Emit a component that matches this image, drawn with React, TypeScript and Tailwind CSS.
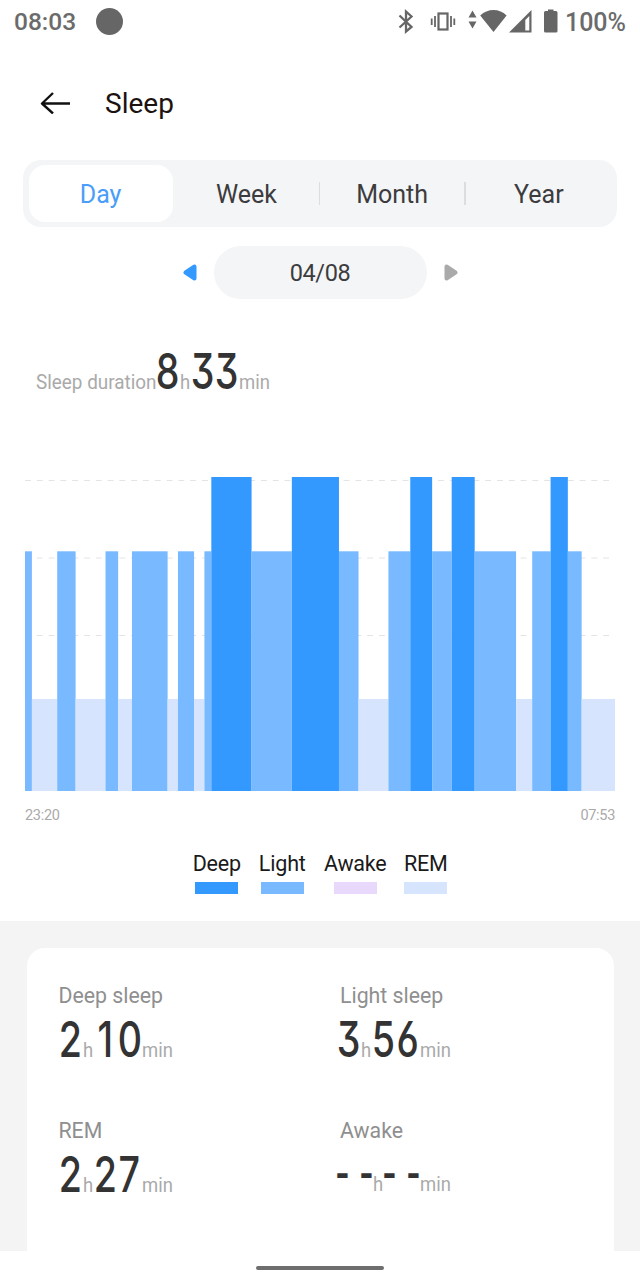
import { useState } from 'react';

type Stage = 'deep' | 'light' | 'rem';

// [stage, minutes], from 23:20 to 07:53
const SEGMENTS: [Stage, number][] = [
  ['light', 6],
  ['rem', 22],
  ['light', 16],
  ['rem', 26],
  ['light', 11],
  ['rem', 12],
  ['light', 31],
  ['rem', 9],
  ['light', 14],
  ['rem', 9],
  ['light', 6],
  ['deep', 35],
  ['light', 35],
  ['deep', 41],
  ['light', 17],
  ['rem', 26],
  ['light', 19],
  ['deep', 19],
  ['light', 17],
  ['deep', 20],
  ['light', 36],
  ['rem', 14],
  ['light', 16],
  ['deep', 15],
  ['light', 12],
  ['rem', 29],
];

const STAGE_STYLE: Record<Stage, { height: number; fill: string }> = {
  deep: { height: 314, fill: '#3399ff' },
  light: { height: 239.7, fill: '#78b9ff' },
  rem: { height: 92, fill: '#d6e4fe' },
};

const LEGEND = [
  { label: 'Deep', swatch: 'bg-[#3399ff]', width: 'w-[48px]' },
  { label: 'Light', swatch: 'bg-[#78b9ff]', width: 'w-[48px]' },
  { label: 'Awake', swatch: 'bg-[#e8d8fb]', width: 'w-[63px]' },
  { label: 'REM', swatch: 'bg-[#d6e4fe]', width: 'w-[43px]' },
];

const TABS = ['Day', 'Week', 'Month', 'Year'];

function StatusBar() {
  return (
    <div className="flex h-11 items-center justify-between px-[14px] text-[#6b6b6b]">
      <div className="flex items-center">
        <span className="w-[82px] pt-px text-[24.5px] leading-none font-medium">08:03</span>
        <span className="mb-[2px] size-[27px] rounded-full bg-[#666]" />
      </div>
      <div className="flex items-center">
        <svg width="168" height="28" viewBox="392 8 168 28" fill="none">
          <path d="M399.5 15.5 L411.5 27 L406 31.5 V11.5 L411.5 16.5 L399.5 27.5" stroke="#666" strokeWidth="2.3" />
          <rect x="438.5" y="13.5" width="9" height="16" stroke="#666" strokeWidth="2.2" />
          <path d="M435 16v11M451 16v11M431.7 18.5v6.5M454.3 18.5v6.5" stroke="#666" strokeWidth="1.8" />
          <path d="M472.5 10.5l4 7h-8zM472.5 28.5l4-7h-8z" fill="#666" />
          <path d="M493.5 32 L480.2 15.5 Q486 10 493.5 10 Q501 10 506.6 15.5 Z" fill="#666" />
          <path fillRule="evenodd" d="M509 32.5 L531.5 10 V32.5 Z M525.3 20 V30.5 H529.3 V16 Z" fill="#666" />
          <path d="M544 12.5q0-1.5 1.5-1.5h2.5V9.5h5.5V11h2.5q1.5 0 1.5 1.5v18.5q0 1.5-1.5 1.5h-10.5q-1.5 0-1.5-1.5z" fill="#666" />
        </svg>
        <span className="ml-[5px] pt-px text-[25px] leading-none font-medium">100%</span>
      </div>
    </div>
  );
}

function Figures({ text }: { text: string }) {
  return (
    <span className="inline-flex items-baseline text-[49.5px] leading-[50px] font-medium text-[#333]">
      {text.split('').map((char, i) =>
        /\d/.test(char) ? (
          <span key={i} className="inline-flex w-6 justify-center font-['Inter',sans-serif]">
            <span className="scale-x-[0.76] [font-feature-settings:'cv09','cv03']">{char}</span>
          </span>
        ) : (
          <span key={i} className="inline-flex w-3 justify-center whitespace-pre">
            <span className="scale-x-[0.8]">{char}</span>
          </span>
        )
      )}
    </span>
  );
}

function Duration({ hours, minutes }: { hours: string; minutes: string }) {
  return (
    <span className="flex items-baseline text-[20.5px] leading-[50px] text-[#aaa]">
      <Figures text={hours} />
      <span className="w-[11px]">
        <span className="inline-block origin-left scale-x-90">h</span>
      </span>
      <Figures text={minutes} />
      <span className="origin-left scale-x-90">min</span>
    </span>
  );
}

function SleepChart() {
  const total = SEGMENTS.reduce((sum, [, minutes]) => sum + minutes, 0);
  let elapsed = 0;

  return (
    <svg width="590" height="314" viewBox="0 0 590 314">
      {[3.5, 81, 158.5].map(y => (
        <line key={y} x1="0" x2="590" y1={y} y2={y} stroke="#e4e4e4" strokeWidth="1" strokeDasharray="5.9 5.9" />
      ))}
      {SEGMENTS.map(([stage, minutes], i) => {
        const { height, fill } = STAGE_STYLE[stage];
        const x = (elapsed / total) * 590;
        elapsed += minutes;
        return <rect key={i} x={x} y={314 - height} width={(minutes / total) * 590} height={height} fill={fill} />;
      })}
    </svg>
  );
}

function Stat({ label, hours, minutes, indent }: { label: string; hours: string; minutes: string; indent?: string }) {
  return (
    <div className="h-[135px]">
      <p className={`text-[21.3px] leading-[26px] text-[#8f8f8f] ${indent ?? ''}`}>{label}</p>
      <div className="mt-[5px]">
        <Duration hours={hours} minutes={minutes} />
      </div>
    </div>
  );
}

export default function App() {
  const [tab, setTab] = useState('Day');

  return (
    <div className="flex h-[1280px] w-[640px] flex-col overflow-hidden bg-white font-['Roboto',sans-serif]">
      <StatusBar />

      <header className="flex h-[116px] items-center pl-10">
        <button type="button" aria-label="Back">
          <svg width="32" height="24" viewBox="0 0 32 24" fill="none" stroke="#111" strokeWidth="2.4">
            <path d="M30 13.5H2.5M13 3L2 13.5l11 10" strokeLinejoin="round" />
          </svg>
        </button>
        <h1 className="mt-1 ml-[33px] text-[28px] leading-none text-[#1c1210]">Sleep</h1>
      </header>

      <div className="mx-[23px] flex h-[67px] items-center rounded-[18px] bg-[#f4f5f7] px-[5.5px]">
        {TABS.map((name, i) => (
          <button
            key={name}
            type="button"
            onClick={() => setTab(name)}
            className="flex h-[57px] flex-1 items-center"
          >
            <span
              className={`flex h-full flex-1 items-center justify-center rounded-2xl pt-[3px] text-[25px] ${
                tab === name ? 'bg-white text-[#4a9df8]' : 'text-[#3c3c3e]'
              } ${i === 3 ? 'pl-[2px]' : ''}`}
            >
              {name}
            </span>
            <span className={`h-[23px] w-[1.5px] ${i === 1 || i === 2 ? 'bg-[#dcdddf]' : ''}`} />
          </button>
        ))}
      </div>

      <div className="mt-[19px] flex h-[53px] items-center justify-center">
        <svg width="14" height="17" viewBox="0 0 14 17" fill="#3399ff" stroke="#3399ff" strokeWidth="4" strokeLinejoin="round">
          <path d="M2.5 8.5L11.5 2.5v12z" />
        </svg>
        <div className="mx-[17px] flex h-full w-[213px] items-center justify-center rounded-full bg-[#f4f5f7] pt-[2px] text-[23.5px] tracking-[-0.4px] text-[#3c3c3e]">
          04/08
        </div>
        <svg width="14" height="17" viewBox="0 0 14 17" fill="#aaa" stroke="#aaa" strokeWidth="4" strokeLinejoin="round">
          <path d="M11.5 8.5L2.5 2.5v12z" />
        </svg>
      </div>

      <div className="mt-[47px] flex h-[50px] items-baseline pl-9 text-[#aaa]">
        <span className="w-[120px] text-[21px] leading-[50px] whitespace-nowrap">
          <span className="inline-block origin-left scale-x-[0.9]">Sleep duration</span>
        </span>
        <Duration hours="8" minutes="33" />
      </div>

      <div className="mx-[25px] mt-[81px]">
        <SleepChart />
        <div className="mt-[15px] flex justify-between text-[14.5px] leading-[20px] tracking-[-0.3px] text-[#aaa]">
          <span>23:20</span>
          <span>07:53</span>
        </div>
      </div>

      <div className="mt-[24px] flex justify-center gap-[17.5px]">
        {LEGEND.map(({ label, swatch, width }) => (
          <div key={label} className={`flex flex-col items-center ${width}`}>
            <span className="text-[21.5px] leading-[28px] tracking-[-0.2px] text-[#1a1a1a]">{label}</span>
            <span className={`mt-[4px] h-[12px] w-[43px] ${swatch}`} />
          </div>
        ))}
      </div>

      <div className="mt-[27px] h-[330px] overflow-hidden bg-[#f4f4f4] px-[26.5px] pt-[26.5px]">
        <div className="grid h-[320px] grid-cols-[278px_1fr] content-start rounded-t-[18px] bg-white pt-[35px] pl-8">
          <Stat label="Deep sleep" hours="2" minutes="10" />
          <Stat label="Light sleep" hours="3" minutes="56" indent="pl-[3.5px]" />
          <Stat label="REM" hours="2" minutes="27" />
          <Stat label="Awake" hours="- -" minutes="- -" indent="pl-[3.5px]" />
        </div>
      </div>

      <div className="flex flex-1 justify-center pt-[15px]">
        <div className="h-[3.5px] w-32 rounded-full bg-[#6e6e6e]" />
      </div>
    </div>
  );
}
